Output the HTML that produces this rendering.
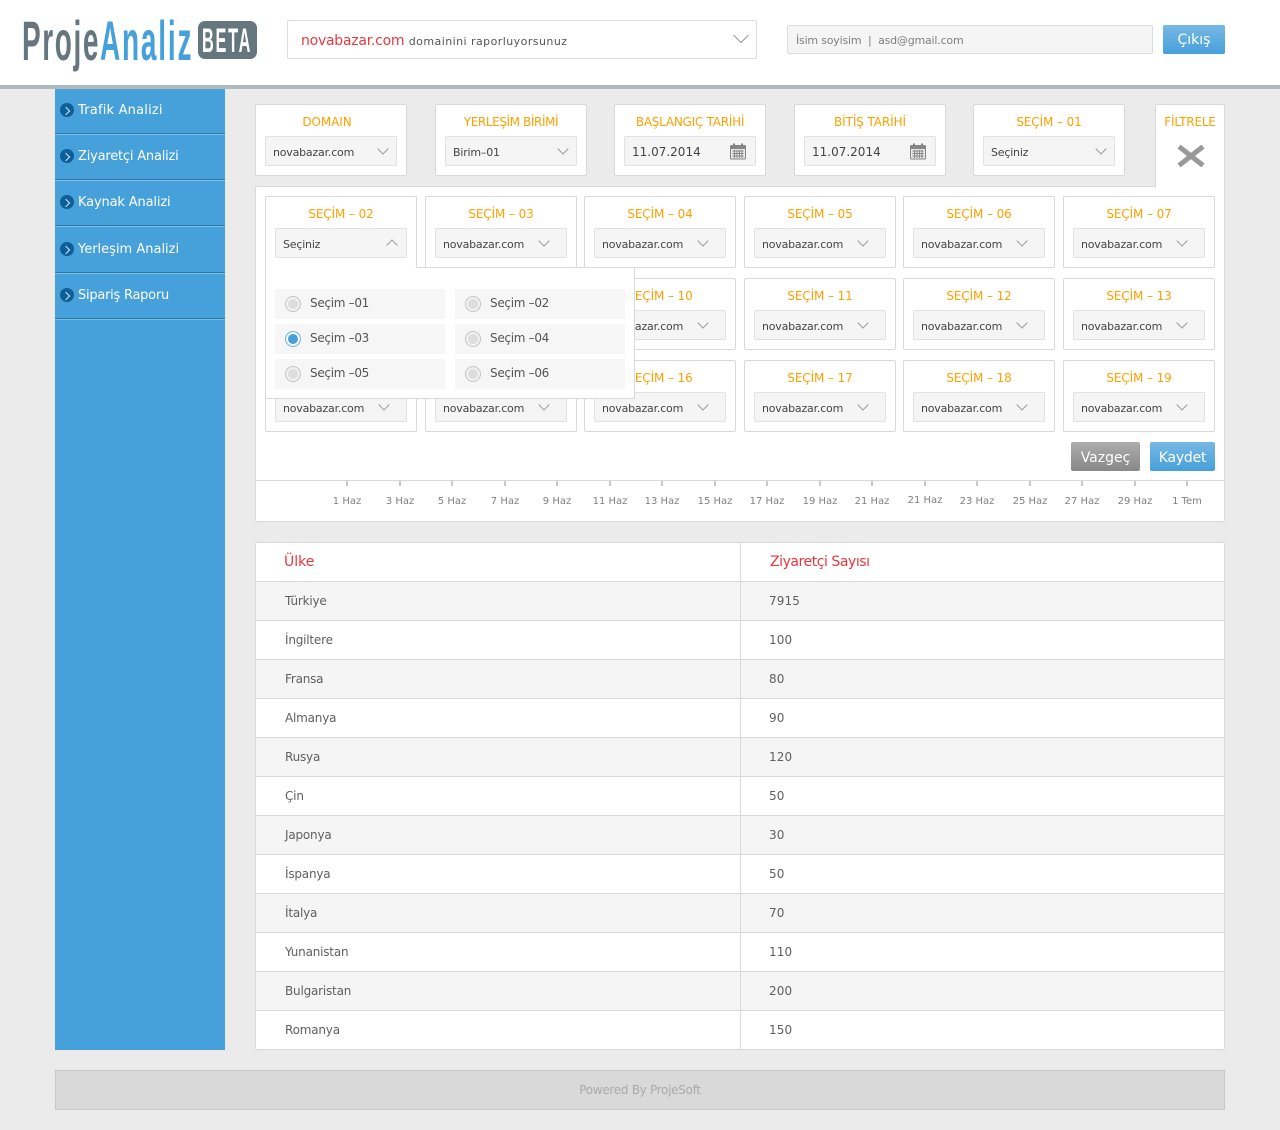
<!DOCTYPE html>
<html lang="tr"><head><meta charset="utf-8"><title>ProjeAnaliz</title>
<style>
*{box-sizing:border-box}
html,body{margin:0;padding:0}
body{width:1280px;height:1130px;position:relative;overflow:hidden;background:#ebebeb;font-family:"DejaVu Sans",sans-serif;color:#555}
.a{position:absolute}
#hd{left:0;top:0;width:1280px;height:89px;background:#fff;border-bottom:4px solid #aeb9be}
#side{left:55px;top:89px;width:170px;height:961px;background:#46a0da}
.m{position:absolute;left:0;width:170px;height:46px;border-bottom:1px solid #2f76a8;box-shadow:0 1px 0 #7cbce6;color:#fff;font-size:13px;line-height:16px;padding:15px 0 0 23px}
.m i{position:absolute;left:5px;top:15px;width:14px;height:14px;border-radius:50%;background:#0e5f98}
.m i:after{content:"";position:absolute;left:3px;top:4.500px;width:5px;height:5px;border-top:1px solid #cfe4f3;border-right:1px solid #cfe4f3;transform:rotate(45deg)}
.c{position:absolute;width:152px;height:72px;background:#fff;border:1px solid #d9d9d9;border-radius:2px;text-align:center}
.c b{display:block;font-weight:normal;font-size:12px;line-height:14px;color:#ffa000;margin-top:10px;white-space:nowrap;letter-spacing:-.1px}
.s{position:absolute;left:9px;top:31px;width:132px;height:30px;background:#f5f5f5;border:1px solid #e2e2e2;border-radius:2px;font-size:11px;line-height:31px;color:#444;text-align:left;padding-left:7px;white-space:nowrap;letter-spacing:-.2px}
.s:after{content:"";position:absolute;left:113px;top:8px;width:7px;height:7px;border-right:1px solid #999;border-bottom:1px solid #999;transform:rotate(45deg)}
.s.k:after{left:104px}
.s.u:after{left:112px;top:12px;transform:rotate(225deg)}
.s.n:after{display:none}
.s.d{font-size:12px;letter-spacing:0;line-height:30px}
.s svg{position:absolute;left:105px;top:6px}
#pn{left:255px;top:186px;width:970px;height:336px;background:#fff;border:1px solid #d9d9d9;border-radius:2px}
#tab{left:1155px;top:104px;width:70px;height:84px;background:#fff;border:1px solid #d9d9d9;border-bottom:0;border-radius:2px 2px 0 0;text-align:center}
#tab b{display:block;font-weight:normal;font-size:12px;line-height:14px;color:#ffa000;margin-top:10px;letter-spacing:-.2px}
#dd{left:265px;top:267px;width:370px;height:132px;background:#fff;border:1px solid #d9d9d9;z-index:5}
.o{position:absolute;width:170px;height:30px;background:#f6f6f6;font-size:12px;line-height:28px;padding-left:35px;color:#555;letter-spacing:-.3px}
.o i{position:absolute;left:10px;top:7px;width:16px;height:16px;border-radius:50%;background:#ddd;border:1px solid #c4c4c4;box-shadow:inset 0 0 0 2px #f2f2f2}
.o.on i{background:#46a0da;border-color:#71b7e6;box-shadow:inset 0 0 0 2px #fff}
.btn{position:absolute;top:442px;height:29px;border-radius:2px;color:#fff;font-size:14px;line-height:32px;text-align:center}
.t{position:absolute;top:481px;width:2px;height:5px;margin-left:-1px;background:#c8c8c8}
.l{position:absolute;top:495px;width:60px;text-align:center;font-size:10px;line-height:13px;color:#808080;white-space:nowrap;letter-spacing:0}
#tb{left:255px;top:542px;width:970px;height:508px;background:#fff;border:1px solid #d9d9d9;border-radius:2px}
.r{position:absolute;left:0;width:968px;height:39px;border-top:1px solid #d9d9d9;font-size:12px;line-height:38px;color:#5f5f5f}
.r.e{background:#f5f5f5}
.r span{position:absolute;left:29px;letter-spacing:-.2px}
.r em{position:absolute;left:513px;font-style:normal;letter-spacing:.1px}
#vl{left:740px;top:543px;width:1px;height:506px;background:#d9d9d9;z-index:2}
#ft{left:55px;top:1070px;width:1170px;height:40px;background:#d9d9d9;border:1px solid #c8c8c8;text-align:center;font-size:12px;line-height:38px;color:#aaa;letter-spacing:-.3px}
</style></head><body>
<div class="a" id="hd"></div>
<svg class="a" style="left:15px;top:10px" width="250" height="70" font-family="Liberation Sans, sans-serif" font-weight="bold">
<text transform="translate(7 50) scale(.5 1)" font-size="56" letter-spacing="3.200" fill="#65767f">Proje</text>
<text transform="translate(85 50) scale(.5 1)" font-size="56" letter-spacing="3.600" fill="#46a0da">Analiz</text>
<rect x="183" y="11" width="59" height="38" rx="7" fill="#65767f"/>
<text transform="translate(187 42) scale(.48 1)" font-size="34" letter-spacing="3.600" fill="#fff">BETA</text>
</svg>
<div class="a" style="left:287px;top:20px;width:470px;height:39px;background:#fff;border:1px solid #dcdcdc;border-radius:2px;white-space:nowrap;padding-left:13px;line-height:37px;font-size:14px;color:#e63a40;padding-top:2px"><span style="letter-spacing:-.25px">novabazar.com</span> <span style="font-size:11px;color:#555;letter-spacing:.45px">domainini raporluyorsunuz</span>
<svg class="a" style="left:445px;top:13px" width="16" height="10"><path d="M0.500 1L8 8.500L15.500 1" fill="none" stroke="#999" stroke-width="1"/></svg></div>
<div class="a" style="left:787px;top:25px;width:366px;height:29px;background:#f5f5f5;border:1px solid #dcdcdc;border-radius:2px;font-size:11px;line-height:29px;color:#808080;padding-left:8px;white-space:pre;letter-spacing:-.2px">İsim soyisim  |  asd@gmail.com</div>
<div class="btn" style="left:1163px;top:25px;width:62px;background:linear-gradient(#77b8e4,#46a0da);line-height:31px">Çıkış</div>

<div class="a" id="side">
<div class="m" style="top:0;height:45px;padding-top:14px;letter-spacing:.2px"><i style="top:14px"></i>Trafik Analizi</div>
<div class="m" style="top:45px;letter-spacing:-.2px"><i></i>Ziyaretçi Analizi</div>
<div class="m" style="top:91px;letter-spacing:-.15px"><i></i>Kaynak Analizi</div>
<div class="m" style="top:137px;height:47px;padding-top:16px"><i style="top:16px"></i>Yerleşim Analizi</div>
<div class="m" style="top:184px;letter-spacing:-.25px"><i></i>Sipariş Raporu</div>
</div>

<div class="c" style="left:255px;top:104px"><b style="position:relative;left:-4px">DOMAIN</b><div class="s">novabazar.com</div></div>
<div class="c" style="left:435px;top:104px"><b style="letter-spacing:-.4px">YERLEŞİM BİRİMİ</b><div class="s">Birim–01</div></div>
<div class="c" style="left:614px;top:104px"><b style="letter-spacing:-.25px">BAŞLANGIÇ TARİHİ</b><div class="s n d">11.07.2014<svg width="16" height="17" viewBox="0 0 16 17"><rect x=".5" y="2.500" width="15" height="13.500" rx="1" fill="#e8e8e8" stroke="#858585"/><rect x=".5" y="2.500" width="15" height="3.500" fill="#858585"/><path d="M4 .5v3M12 .5v3" stroke="#858585" stroke-width="2"/><path d="M2.500 8h11M2.500 10.500h11M2.500 13h11M4.500 7v8M7 7v8M9.500 7v8M12 7v8" stroke="#858585" stroke-width=".9"/></svg></div></div>
<div class="c" style="left:794px;top:104px"><b>BİTİŞ TARİHİ</b><div class="s n d">11.07.2014<svg width="16" height="17" viewBox="0 0 16 17"><rect x=".5" y="2.500" width="15" height="13.500" rx="1" fill="#e8e8e8" stroke="#858585"/><rect x=".5" y="2.500" width="15" height="3.500" fill="#858585"/><path d="M4 .5v3M12 .5v3" stroke="#858585" stroke-width="2"/><path d="M2.500 8h11M2.500 10.500h11M2.500 13h11M4.500 7v8M7 7v8M9.500 7v8M12 7v8" stroke="#858585" stroke-width=".9"/></svg></div></div>
<div class="c" style="left:973px;top:104px"><b>SEÇİM – 01</b><div class="s">Seçiniz</div></div>

<div class="a" id="pn"></div>
<div class="a" id="tab"><b>FİLTRELE</b><svg class="a" style="left:21px;top:40px" width="28" height="22"><path d="M2 1.500L26 20.500M26 1.500L2 20.500" stroke="#999" stroke-width="5"/></svg></div>

<div class="c" style="left:265px;top:196px;z-index:6;border-bottom-color:#fff"><b>SEÇİM – 02</b><div class="s u">Seçiniz</div></div>
<div class="c" style="left:425px;top:196px"><b>SEÇİM – 03</b><div class="s k">novabazar.com</div></div>
<div class="c" style="left:584px;top:196px"><b>SEÇİM – 04</b><div class="s k">novabazar.com</div></div>
<div class="c" style="left:744px;top:196px"><b>SEÇİM – 05</b><div class="s k">novabazar.com</div></div>
<div class="c" style="left:903px;top:196px"><b>SEÇİM – 06</b><div class="s k">novabazar.com</div></div>
<div class="c" style="left:1063px;top:196px"><b>SEÇİM – 07</b><div class="s k">novabazar.com</div></div>

<div class="c" style="left:265px;top:278px"><b>SEÇİM – 08</b><div class="s k">novabazar.com</div></div>
<div class="c" style="left:425px;top:278px"><b>SEÇİM – 09</b><div class="s k">novabazar.com</div></div>
<div class="c" style="left:584px;top:278px"><b>SEÇİM – 10</b><div class="s k">novabazar.com</div></div>
<div class="c" style="left:744px;top:278px"><b>SEÇİM – 11</b><div class="s k">novabazar.com</div></div>
<div class="c" style="left:903px;top:278px"><b>SEÇİM – 12</b><div class="s k">novabazar.com</div></div>
<div class="c" style="left:1063px;top:278px"><b>SEÇİM – 13</b><div class="s k">novabazar.com</div></div>

<div class="c" style="left:265px;top:360px"><b>SEÇİM – 14</b><div class="s k">novabazar.com</div></div>
<div class="c" style="left:425px;top:360px"><b>SEÇİM – 15</b><div class="s k">novabazar.com</div></div>
<div class="c" style="left:584px;top:360px"><b>SEÇİM – 16</b><div class="s k">novabazar.com</div></div>
<div class="c" style="left:744px;top:360px"><b>SEÇİM – 17</b><div class="s k">novabazar.com</div></div>
<div class="c" style="left:903px;top:360px"><b>SEÇİM – 18</b><div class="s k">novabazar.com</div></div>
<div class="c" style="left:1063px;top:360px"><b>SEÇİM – 19</b><div class="s k">novabazar.com</div></div>

<div class="a" id="dd">
<div class="o" style="left:9px;top:21px"><i></i>Seçim –01</div>
<div class="o" style="left:189px;top:21px"><i></i>Seçim –02</div>
<div class="o on" style="left:9px;top:56px"><i></i>Seçim –03</div>
<div class="o" style="left:189px;top:56px"><i></i>Seçim –04</div>
<div class="o" style="left:9px;top:91px"><i></i>Seçim –05</div>
<div class="o" style="left:189px;top:91px"><i></i>Seçim –06</div>
</div>

<div class="btn" style="left:1071px;width:69px;background:linear-gradient(#adadad,#878787)">Vazgeç</div>
<div class="btn" style="left:1150px;width:65px;background:linear-gradient(#77b8e4,#46a0da);letter-spacing:-.2px">Kaydet</div>

<div class="a" style="left:256px;top:480px;width:968px;height:1px;background:#d9d9d9"></div>
<div class="t" style="left:347px"></div><div class="l" style="left:317px">1 Haz</div>
<div class="t" style="left:400px"></div><div class="l" style="left:370px">3 Haz</div>
<div class="t" style="left:452px"></div><div class="l" style="left:422px">5 Haz</div>
<div class="t" style="left:505px"></div><div class="l" style="left:475px">7 Haz</div>
<div class="t" style="left:557px"></div><div class="l" style="left:527px">9 Haz</div>
<div class="t" style="left:610px"></div><div class="l" style="left:580px">11 Haz</div>
<div class="t" style="left:662px"></div><div class="l" style="left:632px">13 Haz</div>
<div class="t" style="left:715px"></div><div class="l" style="left:685px">15 Haz</div>
<div class="t" style="left:767px"></div><div class="l" style="left:737px">17 Haz</div>
<div class="t" style="left:820px"></div><div class="l" style="left:790px">19 Haz</div>
<div class="t" style="left:872px"></div><div class="l" style="left:842px">21 Haz</div>
<div class="t" style="left:925px"></div><div class="l" style="left:895px;top:494px">21 Haz</div>
<div class="t" style="left:977px"></div><div class="l" style="left:947px">23 Haz</div>
<div class="t" style="left:1030px"></div><div class="l" style="left:1000px">25 Haz</div>
<div class="t" style="left:1082px"></div><div class="l" style="left:1052px">27 Haz</div>
<div class="t" style="left:1135px"></div><div class="l" style="left:1105px">29 Haz</div>
<div class="t" style="left:1187px"></div><div class="l" style="left:1157px">1 Tem</div>

<div class="a" id="tb">
<div class="a" style="left:28px;top:10px;font-size:14px;line-height:18px;color:#e8363f">Ülke</div>
<div class="a" style="left:514px;top:10px;font-size:14px;line-height:18px;color:#e8363f;letter-spacing:-.45px">Ziyaretçi Sayısı</div>
<div class="r e" style="top:38px"><span>Türkiye</span><em>7915</em></div>
<div class="r" style="top:77px"><span>İngiltere</span><em>100</em></div>
<div class="r e" style="top:116px"><span>Fransa</span><em>80</em></div>
<div class="r" style="top:155px"><span>Almanya</span><em>90</em></div>
<div class="r e" style="top:194px"><span>Rusya</span><em>120</em></div>
<div class="r" style="top:233px"><span>Çin</span><em>50</em></div>
<div class="r e" style="top:272px"><span>Japonya</span><em>30</em></div>
<div class="r" style="top:311px"><span>İspanya</span><em>50</em></div>
<div class="r e" style="top:350px"><span>İtalya</span><em>70</em></div>
<div class="r" style="top:389px"><span>Yunanistan</span><em>110</em></div>
<div class="r e" style="top:428px"><span>Bulgaristan</span><em>200</em></div>
<div class="r" style="top:467px"><span>Romanya</span><em>150</em></div>
</div>
<div class="a" id="vl"></div>
<div class="a" id="ft">Powered By ProjeSoft</div>
</body></html>
